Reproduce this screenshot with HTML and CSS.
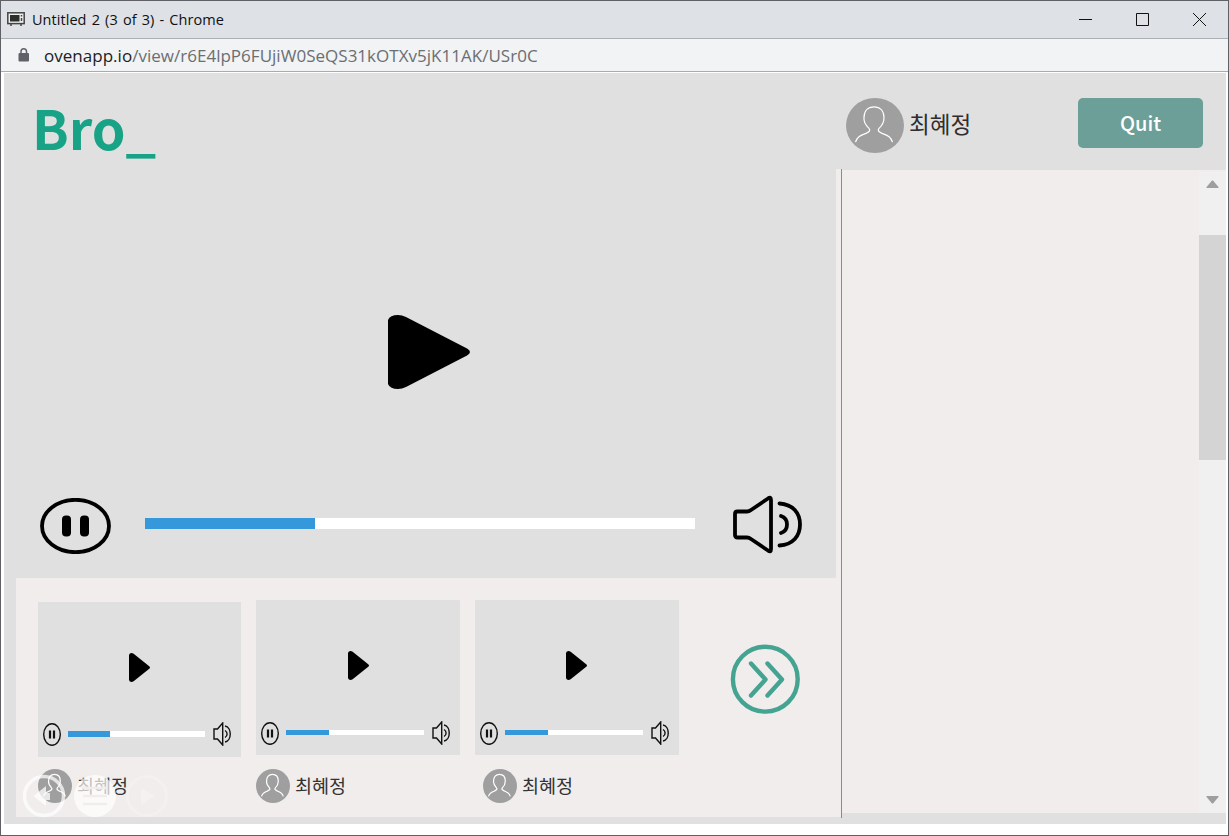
FILE: index.html
```html
<!DOCTYPE html>
<html lang="ko">
<head>
<meta charset="utf-8">
<title>Untitled 2 (3 of 3)</title>
<link rel="stylesheet" href="styles.css">
</head>
<body>
<svg class="defs" aria-hidden="true">
  <symbol id="play" viewBox="0 0 82 74" preserveAspectRatio="none"><path d="M0 5Q2 0 10 0Q14 0 18 2L79 33.500Q85 37 79 40.500L18 72Q14 74 10 74Q2 74 0 69Z"/></symbol>
  <symbol id="person" viewBox="0 0 58 56" preserveAspectRatio="none">
    <ellipse cx="29" cy="28" rx="29" ry="28" fill="#9f9f9f"/>
    <path class="line" d="M9.500 45C11 39 15 38 20 36C24 34 24.500 33 23 31C20 28 17.500 24 18 20C18 13 22 9 28 9C34 9 38 13 38 20C38 24 36 28 33 31C31.500 33 32 34 36 36C41 38 45 39 46.500 45"/>
  </symbol>
</svg>
<div class="window">
  <div class="titlebar">
    <svg class="favicon" width="18" height="14" viewBox="0 0 18 14"><rect x=".8" y=".8" width="16.400" height="10.800" fill="#eee" stroke="#444" stroke-width="1.500"/><rect x="3" y="3" width="9.500" height="6.500" fill="#2c302d"/><path d="M14.500 3v1.500M14.500 6v3M3 13h2M13 13h2" stroke="#444" stroke-width="1.500"/></svg>
    <span class="title">Untitled 2 (3 of 3) - Chrome</span>
    <div class="winbtns">
      <svg width="13" height="13" viewBox="0 0 13 13"><path d="M0 6.500h13"/></svg>
      <svg width="13" height="13" viewBox="0 0 13 13"><path d="M.5.5h12v12H.5z"/></svg>
      <svg width="13" height="13" viewBox="0 0 13 13"><path d="M0 0l13 13M13 0L0 13"/></svg>
    </div>
  </div>
  <div class="address">
    <svg class="lock" width="12" height="14" viewBox="0 0 12 14"><rect x=".5" y="5" width="10.500" height="8.500" rx="1" fill="#5f6368"/><path d="M3 5V3.500a2.750 2.750 0 0 1 5.500 0V5" fill="none" stroke="#5f6368" stroke-width="1.500"/></svg>
    <span class="url">ovenapp.io<span class="path">/view/r6E4lpP6FUjiW0SeQS31kOTXv5jK11AK/USr0C</span></span>
  </div>
  <div class="page">
    <header class="header">
      <div class="logo">Bro_</div>
      <div class="user"><svg class="avatar-lg"><use href="#person"/></svg><span class="name-lg">최혜정</span></div>
      <button class="quit">Quit</button>
    </header>
    <div class="content">
      <main class="left">
        <section class="player">
          <div class="screen"><svg class="play-lg"><use href="#play"/></svg></div>
          <div class="controls">
            <svg class="pause-lg" viewBox="0 0 71 56"><ellipse cx="35.500" cy="28" rx="33.500" ry="26.200" fill="none" stroke="#000" stroke-width="3.800"/><rect x="22" y="17.500" width="9" height="21" rx="4"/><rect x="40" y="17.500" width="9" height="21" rx="4"/></svg>
            <div class="bar bar-lg"><div class="fill" style="width:30.9%"></div></div>
            <svg class="vol-lg" viewBox="0 0 70 59"><path d="M4.500 16.500H14Q16 16.500 18 15L35 3.500Q38 1 38 5V54Q38 58 35 55.500L18 44Q16 42.500 14 42.500H4.500Q2 42.500 2 40V19Q2 16.500 4.500 16.500ZM46.500 8.500C60 9.500 67 18 67 29.500S60 49.500 46.500 50.500M48 21C56 23.500 56 35.500 48 38"/></svg>
          </div>
        </section>
        <section class="strip">
          <article class="card first">
            <div class="thumb">
              <svg class="play-sm"><use href="#play"/></svg>
              <div class="mini"><svg class="pause-sm" viewBox="0 0 18 23"><ellipse cx="9" cy="11.500" rx="8.300" ry="10.800"/><path d="M7 7.500v8M11 7.500v8" stroke-width="2.200"/></svg><div class="bar bar-sm"><div class="fill" style="width:31%"></div></div><svg class="vol-sm" viewBox="0 0 18 24"><path d="M1 7H4.500L9.700 1V23L4.500 17H1ZM12 4C19 5 19 19 12 20M12 8.500C14.800 10 14.800 14 12 15.500"/></svg></div>
            </div>
            <div class="who"><svg class="avatar-sm"><use href="#person"/></svg><span>최혜정</span></div>
          </article>
          <article class="card">
            <div class="thumb">
              <svg class="play-sm"><use href="#play"/></svg>
              <div class="mini"><svg class="pause-sm" viewBox="0 0 18 23"><ellipse cx="9" cy="11.500" rx="8.300" ry="10.800"/><path d="M7 7.500v8M11 7.500v8" stroke-width="2.200"/></svg><div class="bar bar-sm"><div class="fill" style="width:31%"></div></div><svg class="vol-sm" viewBox="0 0 18 24"><path d="M1 7H4.500L9.700 1V23L4.500 17H1ZM12 4C19 5 19 19 12 20M12 8.500C14.800 10 14.800 14 12 15.500"/></svg></div>
            </div>
            <div class="who"><svg class="avatar-sm"><use href="#person"/></svg><span>최혜정</span></div>
          </article>
          <article class="card third">
            <div class="thumb">
              <svg class="play-sm"><use href="#play"/></svg>
              <div class="mini"><svg class="pause-sm" viewBox="0 0 18 23"><ellipse cx="9" cy="11.500" rx="8.300" ry="10.800"/><path d="M7 7.500v8M11 7.500v8" stroke-width="2.200"/></svg><div class="bar bar-sm"><div class="fill" style="width:31%"></div></div><svg class="vol-sm" viewBox="0 0 18 24"><path d="M1 7H4.500L9.700 1V23L4.500 17H1ZM12 4C19 5 19 19 12 20M12 8.500C14.800 10 14.800 14 12 15.500"/></svg></div>
            </div>
            <div class="who"><svg class="avatar-sm"><use href="#person"/></svg><span>최혜정</span></div>
          </article>
          <svg class="more" viewBox="0 0 70 70"><circle cx="35.300" cy="35.200" r="32.400"/><path d="M21 19.500L35.500 35.500L21 51.500M37.500 19.500L52 35.500L37.500 51.500"/></svg>
        </section>
      </main>
      <div class="divider"></div>
      <aside class="side">
        <div class="scrollbar">
          <svg width="13" height="8" viewBox="0 0 13 8"><path d="M.5 8V7L6 .5h1L12.500 7v1z"/></svg>
          <div class="handle"></div>
          <svg class="down" width="13" height="8" viewBox="0 0 13 8"><path d="M.5 0V1L6 7.500h1L12.500 1V0z"/></svg>
        </div>
      </aside>
    </div>
  </div>
  <svg class="overlay" width="150" height="46" viewBox="0 0 150 46">
    <g fill="none" stroke="#fff" stroke-width="3.500" opacity=".72"><circle cx="24" cy="23" r="19.500"/></g>
    <path d="M13.500 23L26 13V20H30V27H26V33Z" fill="#fff" opacity=".75"/>
    <circle cx="75" cy="23" r="21" fill="#fff" opacity=".7"/>
    <path d="M63 15h24M63 23h24M63 31h24" stroke="#f1edec" stroke-width="2.500"/>
    <circle cx="127" cy="23" r="19.500" fill="none" stroke="#fff" stroke-width="3" opacity=".2"/>
    <path d="M121 15L135 23L121 32Z" fill="#fff" opacity=".22"/>
  </svg>
</div>
</body>
</html>
```
FILE: styles.css
```css
* { box-sizing: border-box; }
body { margin: 0; font-family: "Noto Sans CJK KR", sans-serif; overflow: hidden; }
svg { display: block; flex: none; }
.defs { position: absolute; width: 0; height: 0; }
.window { position: relative; width: 1229px; height: 836px; border: 1px solid #606166; background: #fff; }
.titlebar { height: 38px; background: #dee1e6; border-bottom: 1px solid #adafb5; display: flex; align-items: center; padding: 0 22px 0 6px; }
.favicon { margin-bottom: 1px; }
.title { font: 14.500px/20px "Open Sans", sans-serif; letter-spacing: .05px; word-spacing: 1.300px; color: #111; margin-left: 7px; white-space: nowrap; }
.winbtns { margin-left: auto; display: flex; gap: 44px; }
.winbtns svg { fill: none; stroke: #111; stroke-width: 1; }
.address { height: 33px; background: #f1f3f4; border-bottom: 1px solid #a9abae; display: flex; align-items: center; padding-left: 17px; }
.url { font: 17px/22px "Open Sans", sans-serif; letter-spacing: .02px; color: #202124; margin-left: 14px; padding-top: 2px; white-space: nowrap; }
.path { color: #6b6e72; }
.page { margin: 1px 0 0 3px; width: 1222px; height: 751px; background: #e0e0e0; }
.header { height: 96px; display: flex; align-items: flex-start; padding: 25px 23px 0 28px; }
.logo { font-size: 54px; line-height: 66px; margin-top: -4px; font-weight: 700; color: #18a386; }
.user { display: flex; margin-left: auto; width: 232px; }
.avatar-lg { width: 58px; height: 55px; }
.name-lg { font-size: 22.500px; line-height: 50px; color: #2e2e2e; margin-left: 5px; }
.line { fill: none; stroke: #fff; stroke-width: 1.2px; vector-effect: non-scaling-stroke; }
.quit { width: 125px; height: 50px; border: 0; border-radius: 5px; background: #6c9f97; color: #fff; font: 500 20px/50px "Noto Sans CJK KR", sans-serif; padding: 0; }
.content { display: flex; align-items: flex-start; padding-left: 12px; }
.left { width: 825px; height: 648px; background: #f1edec; }
.divider { width: 1px; height: 649px; background: #8f8988; }
.player { width: 820px; height: 409px; background: #e0e0e0; }
.screen { height: 326px; padding: 146px 0 0 372px; }
.play-lg { width: 82px; height: 74px; }
.controls { display: flex; padding-left: 24px; align-items: flex-start; }
.pause-lg { width: 71px; height: 56px; margin-top: 3px; }
.bar { background: #fff; }
.fill { height: 100%; background: #3598db; }
.bar-lg { width: 550px; height: 11px; margin: 23px 38px 0 34px; }
.vol-lg { width: 70px; height: 59px; fill: none; stroke: #000; stroke-width: 3.8; stroke-linecap: round; stroke-linejoin: round; }
.strip { display: flex; align-items: flex-start; padding: 22px 0 0 22px; gap: 15px; }
.card { width: 204px; }
.first { width: 203px; padding-top: 2px; }
.thumb { height: 155px; background: #e0e0e0; padding-top: 51px; }
.play-sm { width: 21px; height: 29px; margin-left: 92px; }
.first .play-sm, .third .play-sm { margin-left: 91px; }
.mini { display: flex; align-items: center; padding-left: 5px; margin-top: 41px; height: 24px; }
.first .mini { margin-top: 40px; }
.pause-sm { width: 18px; height: 23px; fill: none; stroke: #111; stroke-width: 1.4; }
.bar-sm { width: 138px; height: 5px; margin: 0 8px 2px 7px; }
.first .bar-sm { width: 137px; height: 6px; margin-bottom: 0; }
.vol-sm { width: 18px; height: 24px; fill: none; stroke: #111; stroke-width: 1.4; }
.who { display: flex; margin-top: 14px; font-size: 18.500px; line-height: 33px; height: 34px; color: #333; gap: 5px; }
.first .who { margin-top: 12px; }
.third .who { padding-left: 8px; }
.avatar-sm { width: 34px; height: 34px; }
.more { width: 70px; height: 70px; margin: 44px 0 0 36px; fill: none; stroke: #45a391; stroke-width: 4.4; stroke-linecap: round; stroke-linejoin: round; }
.side { width: 384px; height: 643px; margin-top: 1px; background: #f1edec; display: flex; justify-content: flex-end; }
.scrollbar { width: 27px; height: 641px; margin-top: 2px; background: #f0f0f0; display: flex; flex-direction: column; align-items: center; padding: 8px 0 9px; }
.scrollbar svg { fill: #9e9e9e; }
.handle { width: 27px; height: 225px; margin-top: 47px; background: #d4d4d4; }
.down { margin-top: auto; }
.overlay { position: absolute; left: 19px; top: 772px; }
```
